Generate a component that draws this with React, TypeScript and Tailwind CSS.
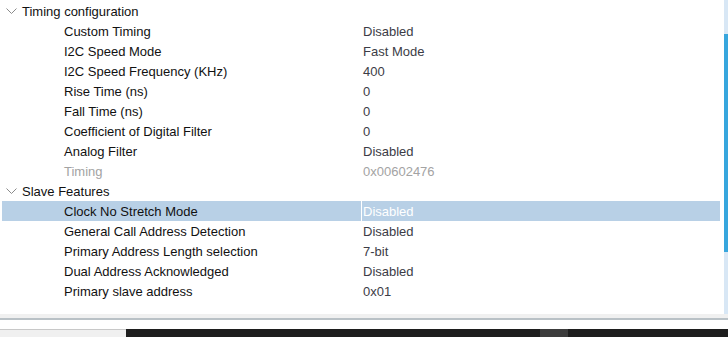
import React from 'react';

type Row = { label: string; value: string; muted?: boolean; selected?: boolean };

const timing: Row[] = [
  { label: 'Custom Timing', value: 'Disabled' },
  { label: 'I2C Speed Mode', value: 'Fast Mode' },
  { label: 'I2C Speed Frequency (KHz)', value: '400' },
  { label: 'Rise Time (ns)', value: '0' },
  { label: 'Fall Time (ns)', value: '0' },
  { label: 'Coefficient of Digital Filter', value: '0' },
  { label: 'Analog Filter', value: 'Disabled' },
  { label: 'Timing', value: '0x00602476', muted: true },
];

const slave: Row[] = [
  { label: 'Clock No Stretch Mode', value: 'Disabled', selected: true },
  { label: 'General Call Address Detection', value: 'Disabled' },
  { label: 'Primary Address Length selection', value: '7-bit' },
  { label: 'Dual Address Acknowledged', value: 'Disabled' },
  { label: 'Primary slave address', value: '0x01' },
];

const Chevron: React.FC = () => (
  <svg width="11" height="7" viewBox="0 0 11 7" className="shrink-0">
    <polyline points="0.5,0.5 5.5,5.5 10.5,0.5" fill="none" stroke="#8a8a8a" strokeWidth="1" />
  </svg>
);

const Group: React.FC<{ title: string }> = ({ title }) => (
  <div className="h-5 flex items-center pl-[4px] gap-[5px] text-[#111]">
    <Chevron />
    <span className="pt-[1px]">{title}</span>
  </div>
);

const PropRow: React.FC<{ row: Row }> = ({ row }) => (
  <div className={`h-5 flex items-center ${row.selected ? 'bg-[#b8d0e6]' : ''}`}>
    <div className={`w-[359px] h-full flex items-center pl-[62px] pt-[1px] ${row.muted ? 'text-[#a3a3a3]' : 'text-[#111]'}`}>
      {row.label}
    </div>
    <div
      className={`flex-1 h-full flex items-center pl-[1px] pt-[1px] border-l ${
        row.selected ? 'border-white text-white' : 'border-transparent'
      } ${row.muted ? 'text-[#a3a3a3]' : row.selected ? '' : 'text-[#3c3c46]'}`}
    >
      {row.value}
    </div>
  </div>
);

export default function App() {
  return (
    <div className="w-[728px] h-[337px] bg-white flex flex-col overflow-hidden text-[13px] leading-none font-['Liberation_Sans',Arial,sans-serif]">
      <div className="h-[314px] flex">
        <div className="flex-1 pt-[1px] pl-[2px] pr-[4px]">
          <Group title="Timing configuration" />
          {timing.map((r) => (
            <PropRow key={r.label} row={r} />
          ))}
          <Group title="Slave Features" />
          {slave.map((r) => (
            <PropRow key={r.label} row={r} />
          ))}
        </div>
        <div className="w-[4px] bg-[#d8e7f5] flex flex-col">
          <div className="h-[34px]" />
          <div className="h-[218px] bg-[#37a6dd]" />
        </div>
      </div>
      <div className="h-[4px] bg-[#f0f0f0]" />
      <div className="h-[2px] bg-[#b9c1c6]" />
      <div className="h-[9px] bg-white" />
      <div className="flex-1 flex">
        <div className="w-[126px] bg-[#f0f0f0] border-t border-[#c8c8c8]" />
        <div className="flex-1 flex bg-[#1e1e1e]">
          <div className="w-[414px]" />
          <div className="w-[28px] bg-[#3c3c3c]" />
        </div>
      </div>
    </div>
  );
}
